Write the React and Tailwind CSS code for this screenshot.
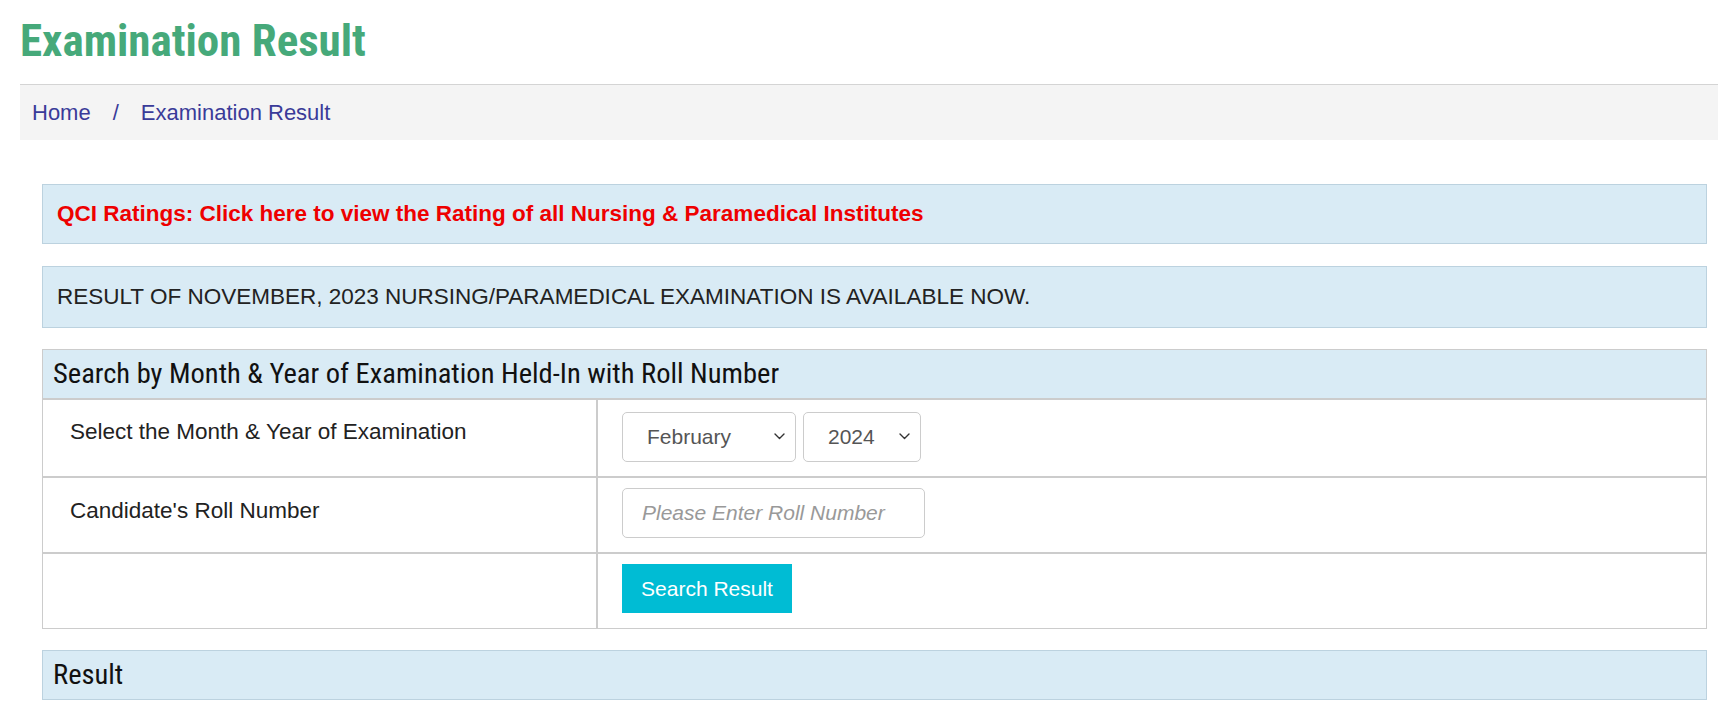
import { useState } from 'react'

const cond = "font-['Roboto_Condensed','DejaVu_Sans_Condensed',Roboto,sans-serif]"
const arial = "font-['Liberation_Sans',Arial,sans-serif]"

function Chevron() {
  return (
    <svg className="pointer-events-none absolute top-[21px] right-[11px] w-[11px] h-[7px]" viewBox="0 0 11 7" fill="none">
      <path d="M1 1 L5.5 5.5 L10 1" stroke="#333" strokeWidth="1.4" strokeLinecap="round" strokeLinejoin="round" />
    </svg>
  )
}

function Select({ value, options, width, onChange }) {
  return (
    <div className="relative h-[50px]" style={{ width }}>
      <select
        value={value}
        onChange={(e) => onChange(e.target.value)}
        className={`block appearance-none w-full h-[50px] border border-[#ccc] rounded-[5px] bg-white pl-[24px] pr-[30px] text-[21px] text-[#555] outline-none ${arial}`}
      >
        {options.map((o) => (
          <option key={o} value={o}>{o}</option>
        ))}
      </select>
      <Chevron />
    </div>
  )
}

const MONTHS = ['January', 'February', 'March', 'April', 'May', 'June', 'July', 'August', 'September', 'October', 'November', 'December']
const YEARS = ['2022', '2023', '2024']

export default function App() {
  const [month, setMonth] = useState('February')
  const [year, setYear] = useState('2024')
  const [roll, setRoll] = useState('')

  return (
    <div className="bg-white min-h-screen pl-[20px] overflow-hidden">
      {/* title */}
      <h1 className={`pt-[14px] text-[45px] leading-[53px] font-bold text-[#46a97a] ${cond}`}>
        Examination Result
      </h1>

      {/* breadcrumb */}
      <div className={`mt-[17px] h-[56px] border-t border-[#d4d4d4] bg-[#f4f4f4] flex items-center pl-[12px] text-[22px] text-[#3a3b99] ${arial}`}>
        <a href="#">Home</a>
        <span className="px-[22px]">/</span>
        <a href="#">Examination Result</a>
      </div>

      <div className="pt-[44px] pl-[22px] pr-[11px]">
        {/* notices */}
        <div className={`h-[60px] flex items-center px-[14px] bg-[#d9ebf5] border border-[#bcd2df] text-[22.5px] font-bold text-[#ee0000] ${arial}`}>
          <a href="#">QCI Ratings: Click here to view the Rating of all Nursing &amp; Paramedical Institutes</a>
        </div>

        <div className={`mt-[22px] h-[62px] flex items-center px-[14px] bg-[#d9ebf5] border border-[#bcd2df] text-[22.5px] text-[#222] ${arial}`}>
          RESULT OF NOVEMBER, 2023 NURSING/PARAMEDICAL EXAMINATION IS AVAILABLE NOW.
        </div>

        {/* search form */}
        <div className="mt-[21px] border border-[#cccccc]">
          <div className={`h-[50px] flex items-center px-[10px] bg-[#d9ebf5] border-b-2 border-[#cccccc] text-[28.5px] font-normal text-[#111] ${cond}`}>
            Search by Month &amp; Year of Examination Held-In with Roll Number
          </div>

          <div className={`grid grid-cols-[555px_1fr] text-[22.5px] text-[#222] ${arial}`}>
            <div className="h-[76px] px-[27px] pt-[19px] leading-[26px] border-r-2 border-[#cccccc]">
              Select the Month &amp; Year of Examination
            </div>
            <div className="h-[76px] pl-[24px] pt-[12px] flex gap-[7px]">
              <Select value={month} options={MONTHS} width="174px" onChange={setMonth} />
              <Select value={year} options={YEARS} width="118px" onChange={setYear} />
            </div>

            <div className="h-[76px] px-[27px] pt-[20px] leading-[26px] border-t-2 border-r-2 border-[#cccccc]">
              Candidate's Roll Number
            </div>
            <div className="h-[76px] pl-[24px] pt-[10px] border-t-2 border-[#cccccc]">
              <input
                value={roll}
                onChange={(e) => setRoll(e.target.value)}
                placeholder="Please Enter Roll Number"
                className={`w-[303px] h-[50px] border border-[#ccc] rounded-[5px] px-[19px] text-[21px] text-[#555] outline-none placeholder:italic placeholder:text-[#999] ${arial}`}
              />
            </div>

            <div className="h-[76px] border-t-2 border-r-2 border-[#cccccc]" />
            <div className="h-[76px] pl-[24px] pt-[10px] border-t-2 border-[#cccccc]">
              <button className={`w-[170px] h-[49px] bg-[#00bcd4] text-white text-[21px] ${arial}`}>
                Search Result
              </button>
            </div>
          </div>
        </div>

        {/* result */}
        <div className={`mt-[21px] h-[50px] flex items-center px-[10px] bg-[#d9ebf5] border border-[#bcd2df] text-[28.5px] text-[#111] ${cond}`}>
          Result
        </div>
      </div>
    </div>
  )
}
